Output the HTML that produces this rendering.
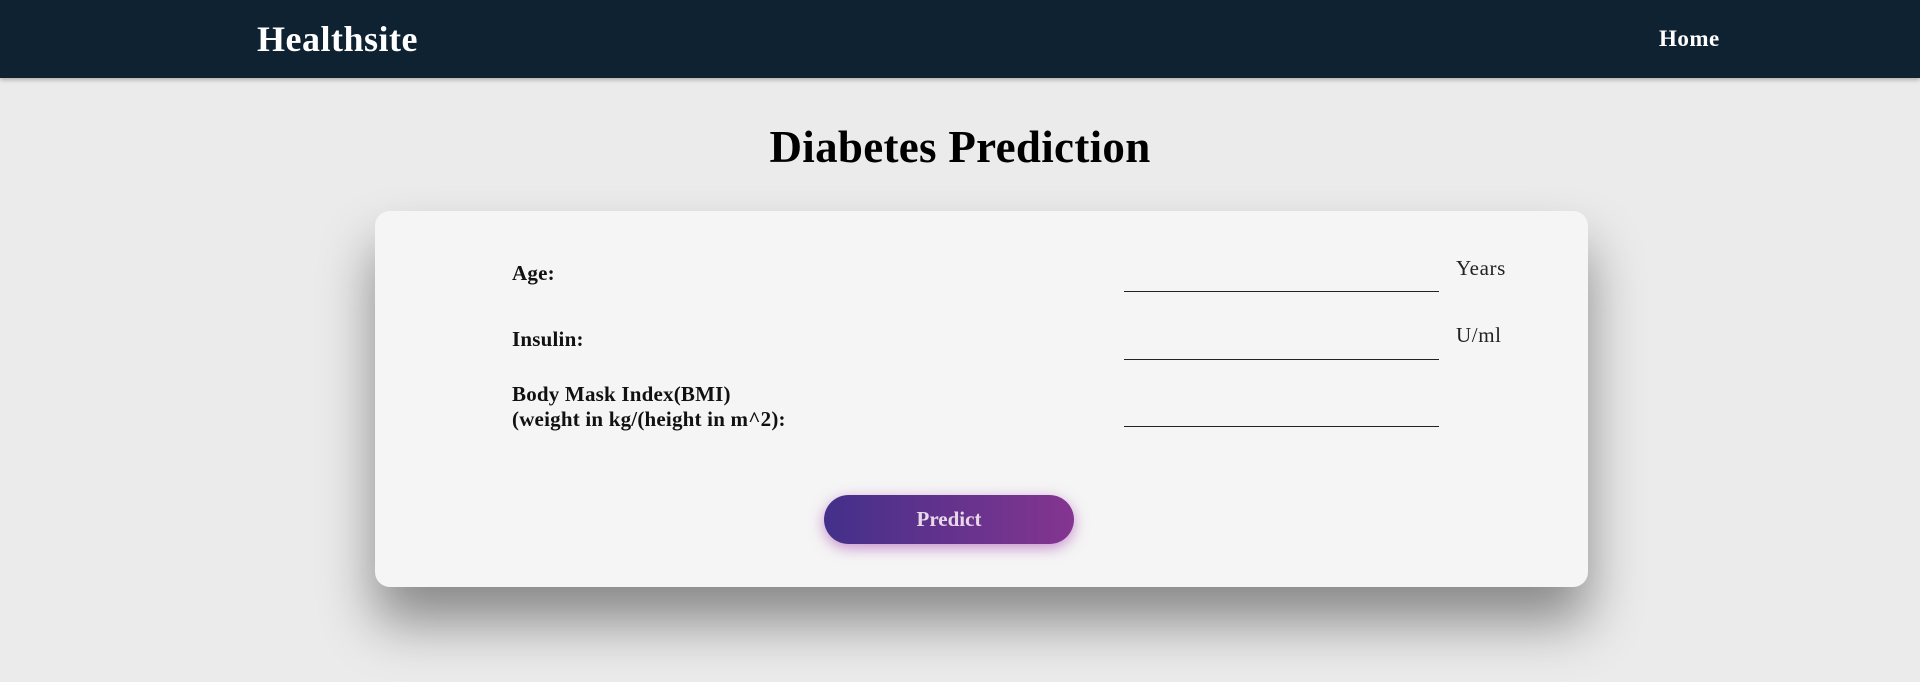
<!DOCTYPE html>
<html><head><meta charset="utf-8"><style>
*{margin:0;padding:0;box-sizing:border-box}
body{width:1920px;height:682px;background:#ebebeb;font-family:"Liberation Serif",serif;position:relative;overflow:hidden}
.nav{position:absolute;left:0;top:0;width:1920px;height:78px;background:#0f2231;box-shadow:0 2px 4px rgba(0,0,0,.25)}
.brand{position:absolute;left:257px;top:18px;color:#fff;font-weight:bold;font-size:36px;letter-spacing:.5px}
.home{position:absolute;left:1659px;top:26px;color:#fff;font-weight:bold;font-size:23px;letter-spacing:.5px}
h1{position:absolute;left:0;width:1920px;text-align:center;top:121px;font-size:45px;font-weight:bold;color:#000;letter-spacing:.3px}
.card{position:absolute;left:375px;top:211px;width:1213px;height:376px;background:#f5f5f5;border-radius:15px;box-shadow:0 35px 55px rgba(0,0,0,.42)}
.lbl{position:absolute;font-size:21px;font-weight:bold;color:#111;line-height:25px;letter-spacing:.2px}
.line{position:absolute;left:749px;width:315px;height:1px;background:#222}
.unit{position:absolute;left:1081px;font-size:21px;color:#222;letter-spacing:.6px}
.btn{position:absolute;left:449px;top:284px;width:250px;height:49px;border-radius:25px;background:linear-gradient(90deg,#43308a,#843590);color:#e8d8e8;font-weight:bold;font-size:21px;text-align:center;line-height:48px;box-shadow:0 4px 14px rgba(160,60,170,.55)}
</style></head><body>
<div class="nav"><div class="brand">Healthsite</div><div class="home">Home</div></div>
<h1>Diabetes Prediction</h1>
<div class="card">
<div class="lbl" style="left:137px;top:50px">Age:</div>
<div class="line" style="top:80px"></div><div class="unit" style="top:45px">Years</div>
<div class="lbl" style="left:137px;top:116px">Insulin:</div>
<div class="line" style="top:148px"></div><div class="unit" style="top:112px">U/ml</div>
<div class="lbl" style="left:137px;top:171px">Body Mask Index(BMI)<br>(weight in kg/(height in m^2):</div>
<div class="line" style="top:215px"></div>
<div class="btn">Predict</div>
</div>
</body></html>
